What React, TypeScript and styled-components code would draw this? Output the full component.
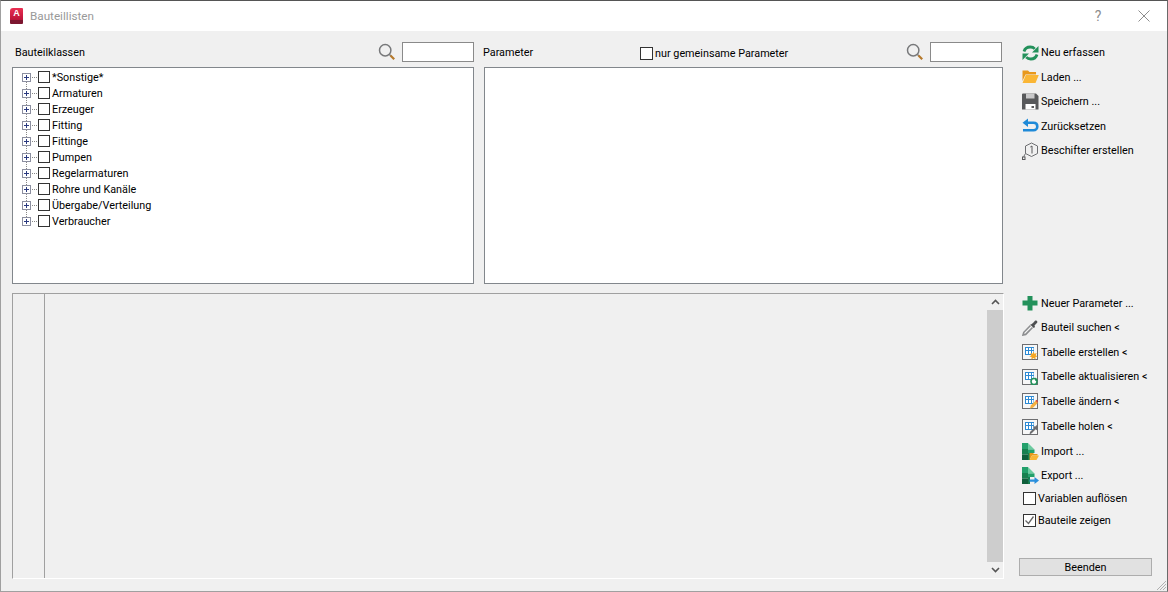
import React from 'react';
import styled, { createGlobalStyle } from 'styled-components';

const GlobalStyle = createGlobalStyle`
  html, body {
    margin: 0;
    padding: 0;
    background: #f0f0f0;
  }
  body {
    font-family: Roboto, "Open Sans", "Liberation Sans", sans-serif;
    font-size: 10.8px;
    color: #000;
  }
`;

const TREE_ITEMS = [
  '*Sonstige*',
  'Armaturen',
  'Erzeuger',
  'Fitting',
  'Fittinge',
  'Pumpen',
  'Regelarmaturen',
  'Rohre und Kanäle',
  'Übergabe/Verteilung',
  'Verbraucher',
];

const Icons = {
  refresh: (
    <svg width="17" height="16" viewBox="0 0 17 16" fill="none">
      <path d="M2 6.500C2.800 3.700 5.300 2 8.300 2c1.900 0 3.400.7 4.500 1.900" stroke="#23915b" strokeWidth="2.800" />
      <path d="M15 9.500C14.200 12.300 11.700 14 8.700 14c-1.900 0-3.400-.7-4.500-1.900" stroke="#23915b" strokeWidth="2.800" />
      <path d="M16.500 1v6.500H10z" fill="#23915b" />
      <path d="M.5 15V8.500H7z" fill="#23915b" />
    </svg>
  ),
  folder: (
    <svg width="17" height="16" viewBox="0 0 17 16">
      <path d="M0.500 1.500h5.500l1.500 1.500h6.500v2.500H3.500L.5 12z" fill="#e8981c" />
      <path d="M3.800 6H16.800l-3.300 8H.5z" fill="#fab635" />
    </svg>
  ),
  save: (
    <svg width="17" height="17" viewBox="0 0 17 17">
      <path d="M0 1.500A1 1 0 0 1 1 .5h13l2.500 2.500v13.500H0z" fill="#58595b" />
      <rect x="4" y=".5" width="8.500" height="5" fill="#c9c9ca" />
      <rect x="3.500" y="11" width="10" height="5.500" fill="#fff" />
      <rect x="9.500" y="13" width="2.500" height="2" fill="#58595b" />
    </svg>
  ),
  undo: (
    <svg width="17" height="16" viewBox="0 0 17 16" fill="none">
      <path d="M6 .5L.5 4.800 6 9z" fill="#1f8ad8" />
      <path d="M5 4.800h6.500c2.300 0 3.800 1.500 3.800 3.600S13.800 12.200 11.500 12.200H1" stroke="#1f8ad8" strokeWidth="2.600" />
    </svg>
  ),
  label: (
    <svg width="18" height="18" viewBox="0 0 18 18" fill="none">
      <path d="M9.500 1l6 3v7.500l-6 3-6-3V4z" stroke="#6d6e71" />
      <path d="M8.300 5l1.700-1v7.500" stroke="#58595b" />
      <path d="M3.500 11.500L2 14v1" stroke="#6d6e71" />
      <rect x=".5" y="15" width="2.500" height="2.500" stroke="#58595b" />
    </svg>
  ),
  plus: (
    <svg width="16" height="16" viewBox="0 0 16 16">
      <path d="M5.500 1h5v4.500H15.500v5H10.500V15.500h-5V10.500H.5v-5h5z" fill="#23915b" />
    </svg>
  ),
  dropper: (
    <svg width="16" height="16" viewBox="0 0 16 16" fill="none">
      <path d="M9 4.500L11 3l2-2.300c.8-.6 2-.3 2.300.7.2.7 0 1.200-.4 1.700L12.500 5.500 13 7 11.800 8 8 4.500z" fill="#4d4e50" />
      <path d="M8.500 5.500L1.800 12.300 1 15l2.700-.6L10.500 7.500" stroke="#8c8d8f" strokeWidth="1.600" fill="#f4f4f4" />
    </svg>
  ),
};

function TableIcon({ badge }: { badge: 'star' | 'refresh' | 'pencil' | 'dropper' }) {
  return (
    <svg width="16" height="16" viewBox="0 0 16 16">
      <rect x=".5" y=".5" width="15" height="15" fill="#f7f7f7" stroke="#6d6e71" />
      <rect x="3" y="3" width="9" height="8" fill="#2d8ad4" />
      <path d="M4 4h2v2H4zM7 4h2v2H7zM10 4h1.500v2H10zM4 7h2v3H4zM7 7h2v3H7zM10 7h1.500v3H10z" fill="#fff" />
      {badge === 'star' && (
        <path d="M11.500 7.500l.9 2.300 2.300-.8-1 2.200 2 1.200-2.300.7.3 2.400-2.200-1.500-2.200 1.500.3-2.400-2.300-.7 2-1.200-1-2.200 2.300.8z" fill="#f5a623" />
      )}
      {badge === 'refresh' && (
        <>
          <circle cx="12" cy="12.500" r="3" fill="#fff" stroke="#23915b" strokeWidth="1.600" />
          <path d="M13 8.500l2.500 2-2.500 1.500z" fill="#23915b" />
        </>
      )}
      {badge === 'pencil' && (
        <>
          <path d="M8 15.500l.8-3 5-5 2.200 2.200-5 5z" fill="#f5b041" />
          <path d="M13.500 7.800l1-1 2 2-1 1z" fill="#d9443f" />
        </>
      )}
      {badge === 'dropper' && (
        <path d="M7.500 15.500l.5-2.500 4-4-1-1 1-1 1 .8 1.500-1.500c1-.5 1.900.5 1.400 1.400L14.900 9.300l.8 1-1 1-1-1-4 4z" fill="#6d6e71" />
      )}
    </svg>
  );
}

function SheetIcon({ mode }: { mode: 'import' | 'export' }) {
  return (
    <svg width="17" height="17" viewBox="0 0 17 17">
      <path d="M0 0h6v6H0z" fill="#22a06b" />
      <path d="M0 6h6v5.500H0z" fill="#17804f" />
      <path d="M0 11.500h6V17H0z" fill="#0f5f3b" />
      <path d="M6 0l6.500 6.500H6z" fill="#6ccba0" />
      <path d="M6 6.500h6.500V10H6z" fill="#22a06b" />
      <path d="M6 10h2v7H6z" fill="#17804f" />
      {mode === 'import' ? (
        <>
          <path d="M7.500 10h3.500l1 1h3.500v1.500H10l-2.500 4.500z" fill="#e8981c" />
          <path d="M10 12.500h7L14.500 17H7.500z" fill="#fab635" />
        </>
      ) : (
        <path d="M7.500 12.500h5v-2.500l4.500 3.500-4.500 3.500v-2.300h-5z" fill="#2a8fdc" />
      )}
    </svg>
  );
}

function SearchIcon() {
  return (
    <svg width="18" height="18" viewBox="0 0 18 18" fill="none">
      <circle cx="7.200" cy="7.200" r="5.700" stroke="#77787a" strokeWidth="1.500" />
      <path d="M11.500 11.500l1.200 1.200" stroke="#77787a" strokeWidth="1.500" />
      <path d="M12.500 12.500l3.700 3.700" stroke="#b5782a" strokeWidth="2.200" />
    </svg>
  );
}

const Window = styled.div`
  position: relative;
  box-sizing: border-box;
  width: 1168px;
  height: 592px;
  display: flex;
  flex-direction: column;
  background: #f0f0f0;
  border: 1px solid #a0a0a0;
  border-top-color: #555;
  border-right-color: #6a6a6a;
  overflow: hidden;
`;

const TitleBar = styled.header`
  flex: none;
  height: 30px;
  display: flex;
  align-items: center;
  padding: 0 16px 0 9px;
  background: #fff;
`;

const AppLogo = styled.div`
  box-sizing: border-box;
  width: 13px;
  height: 16px;
  margin-right: 7px;
  border-radius: 3px 1px 1px 1px;
  background: linear-gradient(#ea2f52, #bb1339);
  color: #fff;
  font: bold 9px/11px "Liberation Sans", sans-serif;
  text-align: center;
  border-bottom: 4px solid #7c1630;
`;

const TitleText = styled.span`
  flex: 1;
  color: #999;
  font-size: 11.7px;
`;

const TitleButton = styled.span<{ $gap?: number }>`
  width: 14px;
  height: 14px;
  margin-right: ${(p) => p.$gap ?? 0}px;
  display: flex;
  align-items: center;
  justify-content: center;
  color: #8d8d8d;
  font-size: 14px;
`;

const Body = styled.main`
  flex: 1;
  display: flex;
  min-height: 0;
  padding: 11px 15px 12px 11px;
`;

const Content = styled.div`
  width: 992px;
  display: grid;
  grid-template-columns: 462px 519px;
  grid-template-rows: 242px 286px;
  column-gap: 10px;
  row-gap: 9px;
`;

const ListPanel = styled.section`
  display: flex;
  flex-direction: column;
  min-width: 0;
`;

const PanelHeader = styled.div<{ $left: number; $right: number }>`
  flex: none;
  height: 25px;
  display: flex;
  align-items: flex-start;
  padding: 0 ${(p) => p.$right}px 0 ${(p) => p.$left}px;
`;

const PanelLabel = styled.span<{ $shift?: number }>`
  margin-left: ${(p) => p.$shift ?? 0}px;
  line-height: 22px;
`;

const CommonToggle = styled.label`
  display: flex;
  align-items: center;
  gap: 2px;
  height: 22px;
  margin-left: 107px;
`;

const Check = styled.span`
  box-sizing: border-box;
  flex: none;
  width: 13px;
  height: 13px;
  display: block;
  background: #fff;
  border: 1px solid #333;
`;

const SearchGroup = styled.div`
  margin-left: auto;
  display: flex;
  align-items: flex-start;
`;

const SearchGlyph = styled.span`
  width: 18px;
  height: 20px;
  display: flex;
  align-items: center;
  margin-right: 6px;
`;

const SearchBox = styled.div`
  box-sizing: border-box;
  width: 72px;
  height: 20px;
  background: #fff;
  border: 1px solid #8a8a8a;
`;

const ListBox = styled.div`
  flex: 1;
  box-sizing: border-box;
  min-height: 0;
  padding: 1px 0 0 9px;
  background: #fff;
  border: 1px solid #82878c;
`;

const TreeRow = styled.div`
  position: relative;
  height: 16px;
  display: flex;
  align-items: center;
`;

const Expander = styled.span`
  position: relative;
  z-index: 1;
  box-sizing: border-box;
  flex: none;
  width: 9px;
  height: 9px;
  background: #fff;
  border: 1px solid #8c8fa0;

  &::before, &::after {
    content: '';
    position: absolute;
    background: #2b3a80;
  }
  &::before { left: 1px; top: 3px; width: 5px; height: 1px; }
  &::after { left: 3px; top: 1px; width: 1px; height: 5px; }
`;

const DotsH = styled.span`
  flex: none;
  width: 5px;
  margin: 0 1px;
  border-top: 1px dotted #888;
`;

const DotsV = styled.span`
  position: absolute;
  left: 4px;
  top: 12px;
  height: 8px;
  border-left: 1px dotted #888;
`;

const TreeCheck = styled(Check)`
  width: 12px;
  height: 12px;
  margin-right: 2px;
`;

const GridPanel = styled.section`
  grid-column: 1 / span 2;
  box-sizing: border-box;
  margin-right: -1px;
  display: flex;
  background: #f0f0f0;
  border-top: 1px solid #a0a0a0;
  border-left: 1px solid #a0a0a0;
  border-right: 1px solid #fff;
  border-bottom: 1px solid #fff;
`;

const RowHeader = styled.div`
  flex: none;
  width: 31px;
  border-right: 1px solid #a0a0a0;
`;

const GridArea = styled.div`
  flex: 1;
`;

const ScrollBar = styled.div`
  flex: none;
  width: 16px;
  display: flex;
  flex-direction: column;
  background: #f0f0f0;
`;

const ScrollArrow = styled.div`
  flex: none;
  height: 16px;
  display: flex;
  align-items: center;
  justify-content: center;
`;

const ScrollTrack = styled.div`
  flex: 1;
  background: #cdcdcd;
`;

const Sidebar = styled.aside`
  width: 133px;
  margin-left: 15px;
  display: flex;
  flex-direction: column;
`;

const ActionGroup = styled.div<{ $gap: number }>`
  margin-top: ${(p) => p.$gap}px;
  display: flex;
  flex-direction: column;
`;

const ActionRow = styled.div<{ $nudge?: number }>`
  height: 24.5px;
  margin-top: ${(p) => p.$nudge ?? 0}px;
  display: flex;
  align-items: center;
  padding-left: 3px;
  white-space: nowrap;
`;

const ActionIcon = styled.span`
  flex: none;
  width: 19px;
  height: 18px;
  display: flex;
  align-items: center;
`;

const CheckRow = styled.label<{ $nudge?: number }>`
  height: 22px;
  margin-top: ${(p) => p.$nudge ?? 0}px;
  display: flex;
  align-items: center;
  padding-left: 4px;
  gap: 2px;
  white-space: nowrap;
`;

const FinishButton = styled.button`
  box-sizing: border-box;
  width: 133px;
  height: 18px;
  margin-top: auto;
  margin-bottom: 3px;
  padding: 0;
  font: inherit;
  color: #000;
  background: #e1e1e1;
  border: 1px solid #adadad;
`;

const ResizeGrip = styled.svg`
  position: absolute;
  right: 0;
  bottom: 0;
`;

const topActions: [React.ReactNode, string][] = [
  [Icons.refresh, 'Neu erfassen'],
  [Icons.folder, 'Laden ...'],
  [Icons.save, 'Speichern ...'],
  [Icons.undo, 'Zurücksetzen'],
  [Icons.label, 'Beschifter erstellen'],
];

const bottomActions: [React.ReactNode, string, number?][] = [
  [Icons.plus, 'Neuer Parameter ...'],
  [Icons.dropper, 'Bauteil suchen <'],
  [<TableIcon badge="star" />, 'Tabelle erstellen <'],
  [<TableIcon badge="refresh" />, 'Tabelle aktualisieren <'],
  [<TableIcon badge="pencil" />, 'Tabelle ändern <'],
  [<TableIcon badge="dropper" />, 'Tabelle holen <', 1],
  [<SheetIcon mode="import" />, 'Import ...'],
  [<SheetIcon mode="export" />, 'Export ...'],
];

function Search() {
  return (
    <SearchGroup>
      <SearchGlyph><SearchIcon /></SearchGlyph>
      <SearchBox />
    </SearchGroup>
  );
}

export default function App() {
  return (
    <>
      <GlobalStyle />
      <Window>
        <TitleBar>
          <AppLogo>A</AppLogo>
          <TitleText>Bauteillisten</TitleText>
          <TitleButton $gap={32}>?</TitleButton>
          <TitleButton>
            <svg width="12" height="12" viewBox="0 0 12 12">
              <path d="M.5.5l11 11M11.500.5l-11 11" stroke="#8d8d8d" fill="none" />
            </svg>
          </TitleButton>
        </TitleBar>
        <Body>
          <Content>
            <ListPanel>
              <PanelHeader $left={3} $right={0}>
                <PanelLabel>Bauteilklassen</PanelLabel>
                <Search />
              </PanelHeader>
              <ListBox>
                {TREE_ITEMS.map((item, i) => (
                  <TreeRow key={item}>
                    <Expander />
                    <DotsH />
                    <TreeCheck />
                    {item}
                    {i < TREE_ITEMS.length - 1 && <DotsV />}
                  </TreeRow>
                ))}
              </ListBox>
            </ListPanel>
            <ListPanel>
              <PanelHeader $left={0} $right={1}>
                <PanelLabel $shift={-1}>Parameter</PanelLabel>
                <CommonToggle>
                  <Check />
                  nur gemeinsame Parameter
                </CommonToggle>
                <Search />
              </PanelHeader>
              <ListBox />
            </ListPanel>
            <GridPanel>
              <RowHeader />
              <GridArea />
              <ScrollBar>
                <ScrollArrow>
                  <svg width="9" height="6" viewBox="0 0 9 6">
                    <path d="M1 5l3.500-3.500L8 5" stroke="#555" strokeWidth="1.600" fill="none" />
                  </svg>
                </ScrollArrow>
                <ScrollTrack />
                <ScrollArrow>
                  <svg width="9" height="6" viewBox="0 0 9 6">
                    <path d="M1 1l3.500 3.500L8 1" stroke="#555" strokeWidth="1.600" fill="none" />
                  </svg>
                </ScrollArrow>
              </ScrollBar>
            </GridPanel>
          </Content>
          <Sidebar>
            <ActionGroup $gap={-1.75}>
              {topActions.map(([icon, label]) => (
                <ActionRow key={label}>
                  <ActionIcon>{icon}</ActionIcon>
                  {label}
                </ActionRow>
              ))}
            </ActionGroup>
            <ActionGroup $gap={128.25}>
              {bottomActions.map(([icon, label, nudge]) => (
                <ActionRow key={label} $nudge={nudge}>
                  <ActionIcon>{icon}</ActionIcon>
                  {label}
                </ActionRow>
              ))}
              <CheckRow $nudge={-0.5}>
                <Check />
                Variablen auflösen
              </CheckRow>
              <CheckRow>
                <Check>
                  <svg width="11" height="11" viewBox="0 0 11 11" style={{ display: 'block' }}>
                    <path d="M1.500 5.500l3 3 5-7" stroke="#666" strokeWidth="1.300" fill="none" />
                  </svg>
                </Check>
                Bauteile zeigen
              </CheckRow>
            </ActionGroup>
            <FinishButton>Beenden</FinishButton>
          </Sidebar>
        </Body>
        <ResizeGrip width="12" height="12" viewBox="0 0 12 12">
          <path d="M11 2L2 11M11 5L5 11M11 8L8 11" stroke="#b0b0b0" strokeWidth="1" />
        </ResizeGrip>
      </Window>
    </>
  );
}
